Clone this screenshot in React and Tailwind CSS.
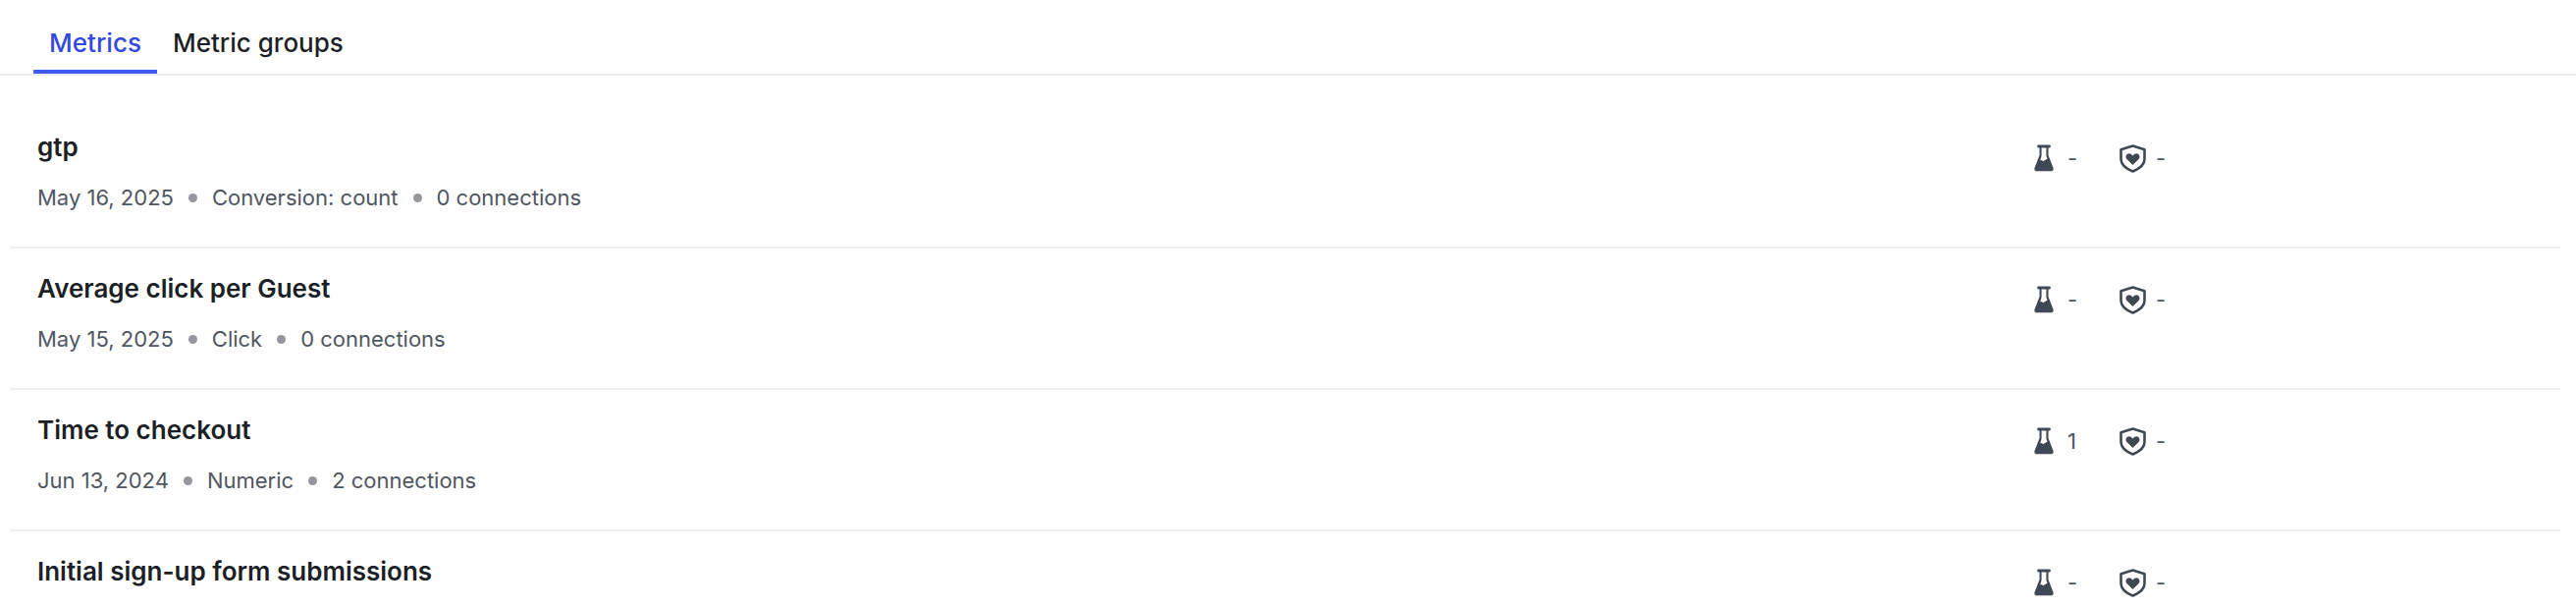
const metrics = [
  { name: 'gtp', date: 'May 16, 2025', type: 'Conversion: count', connections: '0 connections', experiments: '-' },
  { name: 'Average click per Guest', date: 'May 15, 2025', type: 'Click', connections: '0 connections', experiments: '-' },
  { name: 'Time to checkout', date: 'Jun 13, 2024', type: 'Numeric', connections: '2 connections', experiments: '1' },
  { name: 'Initial sign-up form submissions', experiments: '-' },
];

function FlaskIcon() {
  return (
    <svg width="20" height="28" viewBox="0 0 20 28" className="shrink-0">
      <path d="M4.500 2h11" stroke="#3f4853" strokeWidth="2.800" strokeLinecap="round" />
      <path d="M5.500 3h9v8l5 13c.6 1.700-.4 3.200-2 3.200h-15c-1.600 0-2.600-1.500-2-3.200l5-13z" fill="#3f4853" />
      <path d="M7.600 3.500h4.800v8l1.100 3-4 2.500-3.200-1.200 1.300-4.300z" fill="white" />
    </svg>
  );
}

function ShieldIcon() {
  return (
    <svg width="27" height="29" viewBox="0 0 27 29" className="shrink-0">
      <path d="M13.500 1.500L25.500 5.200v9.800c0 5.500-4.800 9.600-12 12.500C6.300 24.600 1.500 20.500 1.500 15V5.200z" fill="none" stroke="#3f4853" strokeWidth="2.600" strokeLinejoin="round" />
      <path d="M13.500 21l-6-6c-2.900-3 1-7.500 4.200-5.200L13.500 11.500l1.800-1.700c3.200-2.300 7.100 2.200 4.200 5.200z" fill="#3f4853" />
    </svg>
  );
}

function MetricRow({ metric, last }) {
  return (
    <div className={`flex h-[144px] items-start justify-between pl-[28px] ${last ? '' : 'border-b-2 border-[#edeff2]'}`}>
      <div className="pt-[23px]">
        <div className="text-[26px] leading-[36px] font-semibold text-[#1c1f26]">{metric.name}</div>
        {metric.date && (
          <div className="mt-[17px] flex items-center text-[22px] leading-[32px] text-[#505661]">
            <span>{metric.date}</span>
            <span className="mx-[15px] h-[9px] w-[9px] rounded-full bg-[#94979c]" />
            <span>{metric.type}</span>
            <span className="mx-[15px] h-[9px] w-[9px] rounded-full bg-[#94979c]" />
            <span>{metric.connections}</span>
          </div>
        )}
      </div>
      <div className="mt-[36px] mr-[391px] flex items-center text-[22px] leading-[32px] text-[#505661]">
        <div className="flex w-[87px] items-center gap-[14px]">
          <FlaskIcon />
          <span>{metric.experiments}</span>
        </div>
        <div className="flex w-[58px] items-center gap-[10px]">
          <ShieldIcon />
          <span>-</span>
        </div>
      </div>
    </div>
  );
}

export default function App() {
  return (
    <div className="h-[620px] overflow-hidden bg-white font-['Inter',sans-serif]">
      <div className="flex h-[77px] border-b-2 border-[#e9ecf0] pl-[34px]">
        <div className="h-[75px] w-[126px] border-b-4 border-[#3c5bf0] pt-[24px] text-center text-[26px] leading-[40px] font-medium text-[#3249e0]">Metrics</div>
        <div className="pt-[24px] pl-[16px] text-[26px] leading-[40px] font-medium text-[#1c1f26]">Metric groups</div>
      </div>
      <div className="mt-[32px] mx-[10px] w-[2598px]">
        {metrics.map((metric, i) => (
          <MetricRow key={metric.name} metric={metric} last={i === metrics.length - 1} />
        ))}
      </div>
    </div>
  );
}
